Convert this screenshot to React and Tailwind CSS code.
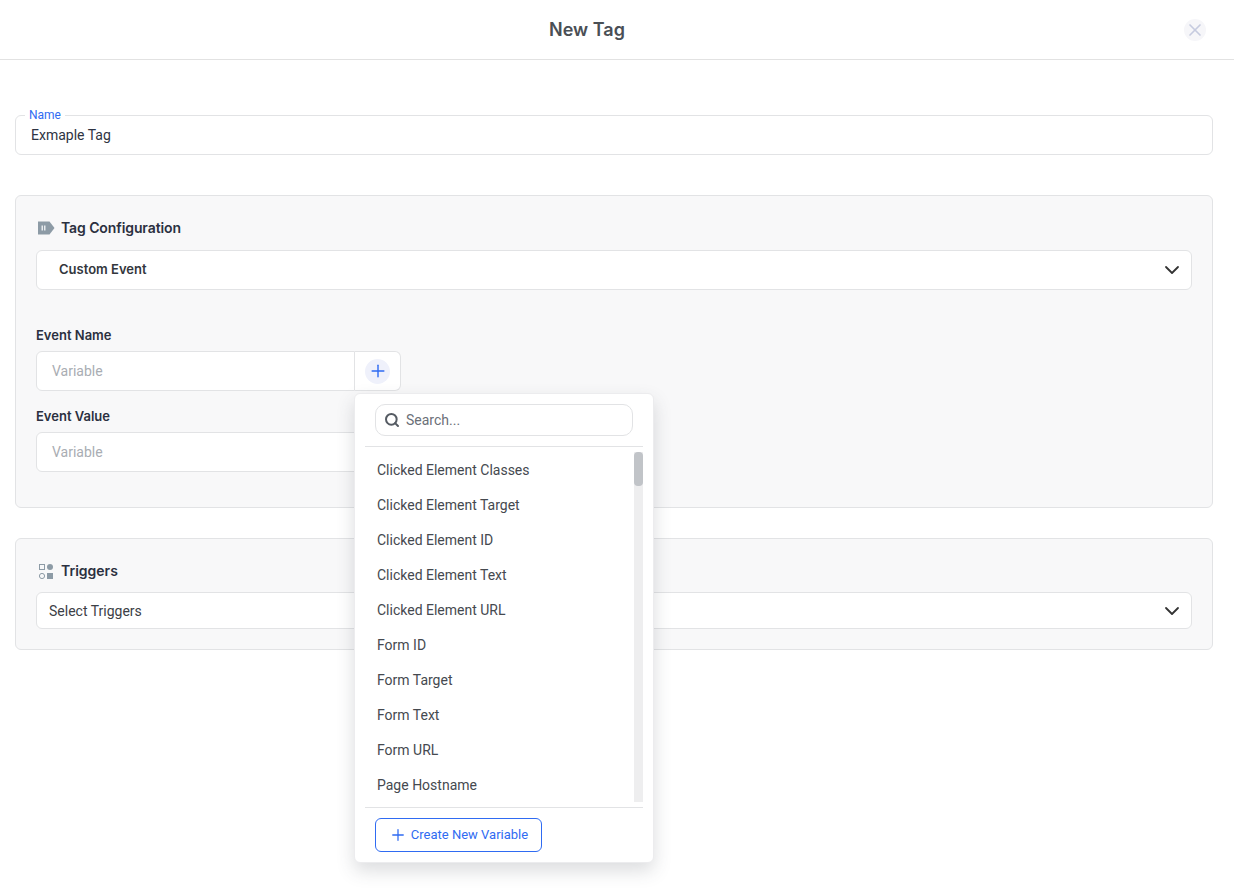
import React from "react";
import { ChevronDown, Plus, Search, X } from "lucide-react";

const items = ["Clicked Element Classes","Clicked Element Target","Clicked Element ID","Clicked Element Text","Clicked Element URL","Form ID","Form Target","Form Text","Form URL","Page Hostname"];

function TagIcon() {
  return (
    <svg width="17" height="14" viewBox="0 0 17 14" className="ml-[2px] shrink-0">
      <path d="M0 0.5H11.5L16.5 7L11.5 13.5H0Z" fill="#8d9ba6" />
      <rect x="3.5" y="4.5" width="1.5" height="5" fill="#e8ebee" />
      <rect x="6" y="4.5" width="1.5" height="5" fill="#e8ebee" />
    </svg>
  );
}

function TriggerIcon() {
  return (
    <svg width="15" height="15" viewBox="0 0 15 15" className="ml-[3px] shrink-0">
      <rect x="0.5" y="0.5" width="5" height="5" fill="none" stroke="#8d9ba6" />
      <circle cx="11" cy="3" r="3" fill="#8d9ba6" />
      <circle cx="3" cy="12" r="2.6" fill="none" stroke="#8d9ba6" />
      <rect x="8" y="9" width="6" height="6" fill="#8d9ba6" />
    </svg>
  );
}

export default function App() {
  return (
    <div className="h-[895px] overflow-hidden bg-white font-['Roboto',sans-serif] text-[#2b3040]">
      <header className="relative flex h-[60px] items-center justify-center border-b border-[#e2e2e2] pr-[60px]">
        <h1 className="font-['Inter',sans-serif] text-[18px] font-semibold text-[#4a4f55]">New Tag</h1>
        <button className="absolute left-[1184px] top-[19px] flex h-[22px] w-[22px] items-center justify-center rounded-full bg-[#f6f6f9]">
          <X size={20} strokeWidth={2} color="#c6cbdf" />
        </button>
      </header>

      <main className="flex w-[1198px] flex-col pl-0 ml-[15px]">
        <div className="relative mt-[55px] flex h-10 items-center rounded-md border border-[#e2e3e5] px-[15px] text-sm text-[#2e3342]">
          <span className="absolute -top-[8px] left-[9px] bg-white px-1 text-xs leading-[14px] text-[#2f6bf2]">Name</span>
          Exmaple Tag
        </div>

        <section className="mt-10 h-[313px] rounded-md border border-[#e2e3e5] bg-[#f8f8f9] px-5 pt-[22px]">
          <div className="flex h-5 items-center gap-[6px] font-['Inter',sans-serif] text-sm font-semibold text-[#2b3040]">
            <TagIcon />
            <span className="tracking-[-0.1px]">Tag Configuration</span>
          </div>
          <div className="mt-[12px] flex h-10 items-center justify-between rounded-md border border-[#e2e3e5] bg-white pl-[22px] pr-[7px] font-['Inter',sans-serif] text-[13px] font-semibold text-[#33373d]">
            Custom Event
            <ChevronDown size={24} strokeWidth={1.8} color="#333" />
          </div>

          <label className="mt-[35px] block font-['Inter',sans-serif] text-[13px] font-semibold leading-5 text-[#2b3040]">Event Name</label>
          <div className="relative mt-[6px] flex h-10 w-[365px] text-sm">
            <div className="flex w-[319px] items-center rounded-l-md border border-[#e2e3e5] bg-white pl-[15px] text-[#a9adb3]">Variable</div>
            <div className="flex w-[46px] items-center justify-center rounded-r-md border border-l-0 border-[#e2e3e5] bg-white">
              <span className="flex h-[25px] w-[25px] items-center justify-center rounded-full bg-[#eff1fb]">
                <Plus size={20} strokeWidth={1.7} color="#2f6bf2" />
              </span>
            </div>

            <div className="absolute left-[318px] top-[42px] z-10 flex h-[470px] w-[300px] flex-col rounded-md border border-[#ececee] bg-white px-[10px] shadow-[0_8px_18px_rgba(60,65,80,0.18)]">
              <div className="mx-[10px] mt-[10px] flex h-8 w-[258px] items-center gap-[6px] rounded-[10px] border border-[#e2e3e5] px-[8px] text-[#6b7078]">
                <Search size={16} strokeWidth={3} color="#555b63" />
                Search...
              </div>
              <div className="mt-[10px] border-t border-[#e2e3e5]" />
              <div className="mt-[5px] flex h-[350px]">
                <ul className="flex-1 pl-3">
                  {items.map((item) => (
                    <li key={item} className="flex h-[35px] items-center text-sm text-[#45494f]">{item}</li>
                  ))}
                </ul>
                <div className="w-[9px] bg-[#eeeeef]">
                  <div className="h-[34px] w-[9px] rounded-[4px] bg-[#c1c4c8]" />
                </div>
              </div>
              <div className="mt-[5px] border-t border-[#e2e3e5]" />
              <button className="ml-[10px] mt-[10px] flex h-[34px] w-[167px] items-center justify-center gap-[4px] rounded-md border border-[#2f6bf2] text-[13px] text-[#2f6bf2]">
                <Plus size={18} strokeWidth={1.7} />
                Create New Variable
              </button>
            </div>
          </div>

          <label className="mt-[15px] block font-['Inter',sans-serif] text-[13px] font-semibold leading-5 text-[#2b3040]">Event Value</label>
          <div className="mt-[6px] flex h-10 w-[365px] items-center rounded-md border border-[#e2e3e5] bg-white pl-[15px] text-sm text-[#a9adb3]">Variable</div>
        </section>

        <section className="mt-[30px] h-[112px] rounded-md border border-[#e2e3e5] bg-[#f8f8f9] px-5 pt-[22px]">
          <div className="flex h-5 items-center gap-[7px] font-['Inter',sans-serif] text-sm font-semibold text-[#2b3040]">
            <TriggerIcon />
            Triggers
          </div>
          <div className="mt-[11px] flex h-[37px] items-center justify-between rounded-md border border-[#e2e3e5] bg-white pl-3 pr-[7px] text-sm text-[#3c4046]">
            Select Triggers
            <ChevronDown size={24} strokeWidth={1.8} color="#333" />
          </div>
        </section>
      </main>
    </div>
  );
}
